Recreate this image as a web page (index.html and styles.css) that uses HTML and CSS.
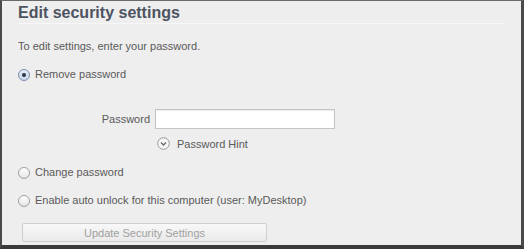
FILE: index.html
```html
<!DOCTYPE html>
<html>
<head>
<meta charset="utf-8">
<link rel="stylesheet" href="styles.css">
</head>
<body>
<div class="frame">
  <h1 class="title">Edit security settings</h1>
  <p class="intro">To edit settings, enter your password.</p>
  <label class="radio-row first">
    <span class="radio checked"><span class="dot"></span></span>
    <span>Remove password</span>
  </label>
  <div class="pw-row">
    <span class="pw-label">Password</span>
    <span class="pw-input"></span>
  </div>
  <div class="hint-row">
    <svg class="hint-icon" width="13" height="13" viewBox="0 0 13 13">
      <circle cx="6.5" cy="6.5" r="5.8" fill="#f6f6f6" stroke="#9a9a9a" stroke-width="1"/>
      <path d="M4 5.5 L6.5 8 L9 5.5" fill="none" stroke="#666" stroke-width="1.3"/>
    </svg>
    <span class="hint-text">Password Hint</span>
  </div>
  <label class="radio-row second">
    <span class="radio"></span>
    <span>Change password</span>
  </label>
  <label class="radio-row third">
    <span class="radio"></span>
    <span>Enable auto unlock for this computer (user: MyDesktop)</span>
  </label>
  <div class="btn-row">
    <span class="btn">Update Security Settings</span>
  </div>
</div>
</body>
</html>
```

FILE: styles.css
```css
html, body {
  margin: 0;
  padding: 0;
  background: #eeeeee;
}
.frame {
  box-sizing: border-box;
  width: 524px;
  height: 249px;
  border-left: 2px solid #4a4a4a;
  border-top: 1px solid #6a6a6a;
  border-right: 3px solid #4a4a4a;
  border-bottom: 4px solid #3a3a3a;
  background: #eeeeee;
  padding: 0 0 0 16px;
  font-family: "Liberation Sans", Arial, sans-serif;
  font-size: 11px;
  color: #5a5a5a;
  display: flex;
  flex-direction: column;
}
.title {
  margin: 0;
  padding-top: 2px;
  font-size: 16px;
  font-weight: bold;
  color: #4d5361;
  line-height: 19px;
  height: 20px;
  border-bottom: 1px solid #f7f7f7;
  margin-right: 16px;
}
.intro {
  margin: 16px 0 0 0;
  line-height: 13px;
}
.radio-row {
  display: flex;
  align-items: center;
  gap: 5px;
  line-height: 13px;
}
.radio-row.first { margin-top: 15px; }
.radio-row.second { margin-top: 16px; }
.radio-row.third { margin-top: 15px; }
.radio {
  box-sizing: border-box;
  width: 12px;
  height: 12px;
  border-radius: 50%;
  border: 1px solid #a0a0a0;
  background: linear-gradient(#ffffff, #e6e6e6);
  display: flex;
  align-items: center;
  justify-content: center;
}
.radio.checked {
  border-color: #7c8fb0;
  background: linear-gradient(#e4ebf6, #c9d6ea);
}
.dot {
  width: 4px;
  height: 4px;
  border-radius: 50%;
  background: #2b3548;
}
.pw-row {
  margin-top: 28px;
  display: flex;
  align-items: center;
  gap: 5px;
  padding-left: 80px;
}
.pw-label {
  width: 52px;
  text-align: right;
}
.pw-input {
  box-sizing: border-box;
  width: 180px;
  height: 20px;
  background: #ffffff;
  border: 1px solid #c4c4c4;
  box-shadow: inset 0 1px 1px rgba(0,0,0,0.08);
}
.hint-row {
  margin-top: 8px;
  display: flex;
  align-items: center;
  gap: 7px;
  padding-left: 139px;
}
.btn-row {
  margin-top: 16px;
  padding-left: 4px;
}
.btn {
  box-sizing: border-box;
  display: flex;
  align-items: center;
  justify-content: center;
  width: 245px;
  height: 19px;
  border: 1px solid #cfcfcf;
  border-radius: 2px;
  background: linear-gradient(#f8f8f8, #eaeaea);
  color: #a0a0a0;
  font-size: 11px;
}
```
